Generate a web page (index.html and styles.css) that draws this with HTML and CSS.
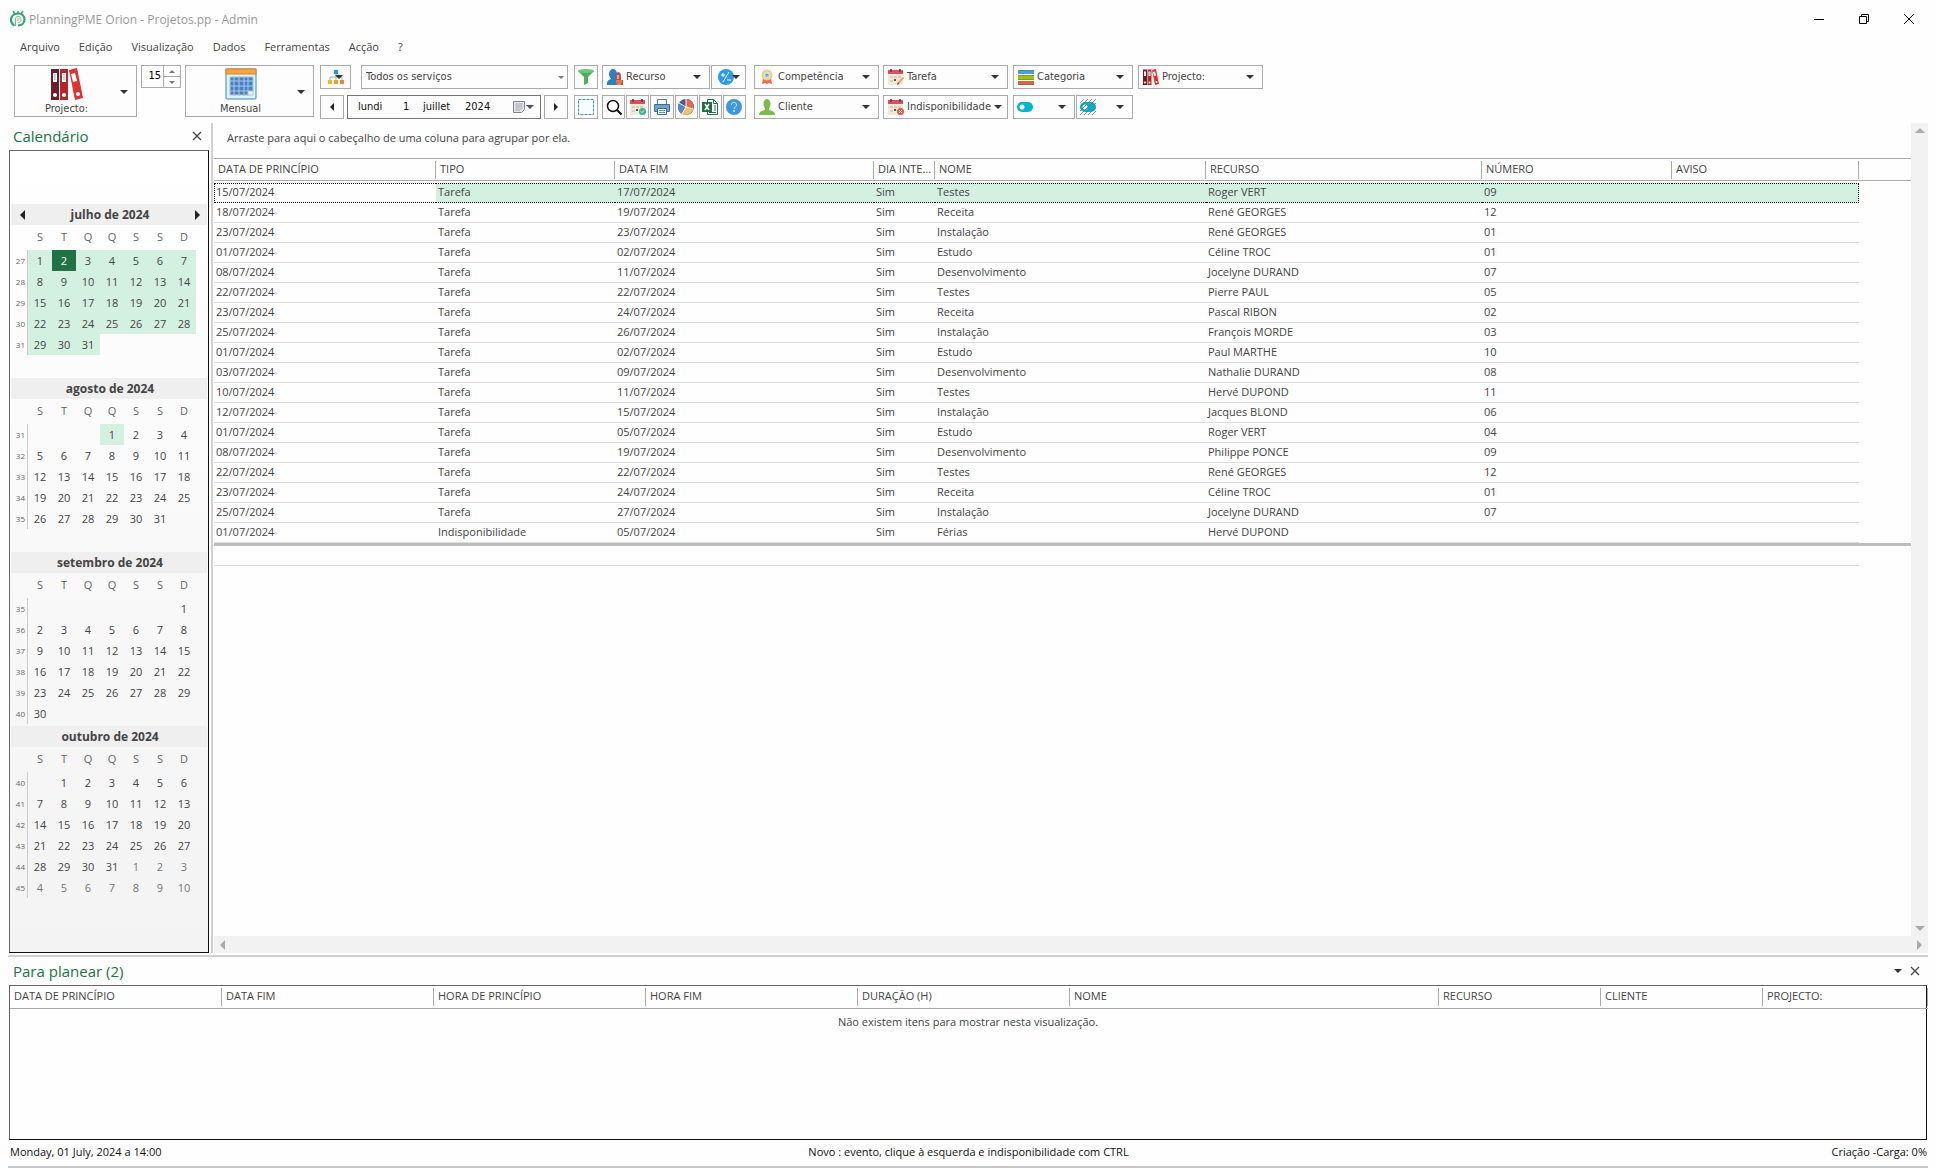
FILE: index.html
```html
<!DOCTYPE html>
<html lang="pt">
<head>
<meta charset="utf-8">
<title>PlanningPME Orion - Projetos.pp - Admin</title>
<link rel="stylesheet" href="styles.css">
</head>
<body>
<svg class="defs" aria-hidden="true">
  <symbol id="i-binders" viewBox="0 0 32 32">
    <path fill="#6b1f2b" d="M0 1h8v31H0z"/><path fill="#b3262c" d="M9 1h8v31H9z"/><path fill="#dd3333" d="M18 2l8-2 6 30-8 2z"/>
    <path fill="#fff" d="M2 5h4v9H2zM11 5h4v9h-4zM20 6l4-1 2 8-4 1z"/>
    <circle cx="4" cy="27" r="2" fill="#fff"/><circle cx="13" cy="27" r="2" fill="#fff"/><circle cx="27" cy="26" r="2" fill="#fff"/>
    <path stroke="#b9a0a3" d="M3 7h2M3 9h2M3 11h2M12 7h2M12 9h2M12 11h2" fill="none"/>
  </symbol>
  <symbol id="i-month" viewBox="0 0 32 32">
    <rect x="1" y="1" width="30" height="30" rx="1" fill="#d9f4fb" stroke="#3d89b5"/>
    <rect x="1" y="1" width="30" height="5" fill="#f6a63c" stroke="#d9822b"/>
    <rect x="5" y="9" width="23" height="18" fill="#4a80c4"/><path fill="#eef4fb" d="M23 23h5v4h-5z"/>
    <path d="M9 8v20M14 8v20M19 8v20M23 8v20M4 13h25M4 18h25M4 23h25" stroke="#a9cbe8" fill="none"/>
    <path d="M5 9h23v18H5z" stroke="#b8c4cc" fill="none"/>
  </symbol>
  <symbol id="i-org" viewBox="0 0 18 16">
    <path d="M9 5v4M3 11V8h12v3M9 8v3" stroke="#a9adb0" fill="none"/>
    <rect x="7" y="1" width="4" height="4" fill="#2196e3"/><rect x="1" y="11" width="4" height="4" fill="#f2b928"/><rect x="7" y="11" width="4" height="4" fill="#f0a030"/><rect x="13" y="11" width="4" height="4" fill="#e88a3c"/>
  </symbol>
  <symbol id="i-funnel" viewBox="0 0 16 16"><path fill="#4fae5b" d="M0 2l6 6v8l4-2V8l6-6z"/><ellipse cx="8" cy="2" rx="8" ry="2" fill="#6cc777"/></symbol>
  <symbol id="i-people" viewBox="0 0 16 16">
    <path fill="#c9484d" d="M11 3c2 0 3 2 3 4v4h2v5H8V5z"/><path fill="#f0b184" d="M10 6h2v4h-2z"/>
    <ellipse cx="6" cy="5" rx="4" ry="5" fill="#2f7fc1"/><path fill="#2f7fc1" d="M4 8h4v2c3 1 4 2 4 6H0c0-4 1-5 4-6z"/><path fill="#e87c4a" d="M9 11h6l-1 5h-4z"/>
  </symbol>
  <symbol id="i-ratio" viewBox="0 0 16 16"><circle cx="8" cy="8" r="8" fill="#2e9be6"/><path d="M3 6h4M5 4v4M5 13l6-10M9 11h4" stroke="#fff" fill="none"/></symbol>
  <symbol id="i-marquee" viewBox="0 0 16 16"><rect x=".5" y=".5" width="15" height="15" fill="#f8fcff" stroke="#3f92d2" stroke-dasharray="3 1"/></symbol>
  <symbol id="i-search" viewBox="0 0 16 16"><circle cx="7" cy="7" r="5.500" fill="none" stroke="#111" stroke-width="1.500"/><path d="M11 11l4.500 4.500" stroke="#111" stroke-width="2"/></symbol>
  <symbol id="i-cal" viewBox="0 0 16 16">
    <path fill="#eeeadb" d="M0 3h15v13H0z"/><path fill="#dc4f5c" d="M0 1h15v4H0z"/><path d="M3 0v3M12 0v3" stroke="#5c3340" stroke-width="1.500"/>
    <path d="M2 7h3v2H2zM6 7h3v2H6zM10 7h3v2h-3zM2 11h3v2H2z" fill="#d6cfba"/><path d="M6 10h2v2H6z" fill="#5e5148"/>
  </symbol>
  <symbol id="i-calok" viewBox="0 0 16 16"><use href="#i-cal"/><circle cx="12.500" cy="12.500" r="3.500" fill="#3fb489"/><path d="M11 12.500l1 1 2-2" stroke="#fff" fill="none"/></symbol>
  <symbol id="i-calpen" viewBox="0 0 16 16"><use href="#i-cal"/><path d="M9 16l1-3 5-5 1 1.500-5 5z" fill="#f0a042"/><path d="M9 16l1-3 1.500 1.500z" fill="#6b4a33"/></symbol>
  <symbol id="i-calno" viewBox="0 0 16 16"><use href="#i-cal"/><circle cx="12.500" cy="12.500" r="3.500" fill="#e2594c"/><path d="M11 11l3 3M14 11l-3 3" stroke="#fff"/></symbol>
  <symbol id="i-print" viewBox="0 0 16 16"><path fill="#fff" stroke="#5c7f9c" d="M3.500.500h9v6h-9z"/><path fill="#6fa3cc" stroke="#3e6c92" d="M.500 5.500h15v7H.500z"/><path fill="#fff" stroke="#3e6c92" d="M3.500 9.500h9v6h-9z"/><path stroke="#5c9bd0" d="M5 11.500h6M5 13.500h6"/></symbol>
  <symbol id="i-pie" viewBox="0 0 16 16"><circle cx="8" cy="8" r="8" fill="#4a5b8c"/><path fill="#e8684a" d="M8 8V0a8 8 0 0 1 7.500 10z"/><path fill="#f3c15f" d="M8 8l7.500 2A8 8 0 0 1 4 15z"/><path fill="#5d87c4" d="M8 8L4 15A8 8 0 0 1 1 4z"/><path d="M8 8V0M8 8l7.500 2M8 8l-4 7M8 8L1 4" stroke="#fff"/></symbol>
  <symbol id="i-excel" viewBox="0 0 16 16"><path fill="#fff" stroke="#1f7145" d="M5.500.500h6l4 4v11h-10z"/><path d="M11.500.500v4h4M12 7h2M12 9h2M12 11h2M7 13.500h7" stroke="#1f7145" fill="none"/><path fill="#1f7145" d="M0 3h10v10H0z"/><path d="M3 5l4 6M7 5l-4 6" stroke="#fff" stroke-width="1.500"/></symbol>
  <symbol id="i-help" viewBox="0 0 16 16"><circle cx="8" cy="8" r="8" fill="#3f97db"/><path d="M5.500 6c0-3.500 5-3.500 5 0 0 2-2.500 2-2.500 4" stroke="#d9ecfa" fill="none"/><circle cx="8" cy="12" r="1" fill="#d9ecfa"/></symbol>
  <symbol id="i-award" viewBox="0 0 16 16"><path fill="#ef6a4c" d="M4 9h4v6l-2-1-3 1zM8 9h4l1 6-3-1-2 1z"/><circle cx="8" cy="6" r="5.500" fill="#f3cf7a"/><circle cx="8" cy="6" r="3.500" fill="#cfe3ee"/><path d="M6.500 5.500h3M6.500 7h3" stroke="#5b8cab"/></symbol>
  <symbol id="i-layers" viewBox="0 0 16 16"><path fill="#4e9fd6" d="M0 1h16v4H0z"/><path fill="#9cc31d" d="M0 6h16v5H0z"/><path fill="#e0603f" d="M0 12h16v4H0z"/><path d="M0 1.500h16M0 6.500h16M0 10.500h16M0 15.500h16" stroke="#4c6e2a" stroke-opacity=".4"/></symbol>
  <symbol id="i-user" viewBox="0 0 16 16"><ellipse cx="8" cy="5" rx="3.500" ry="5" fill="#7cba4c"/><path fill="#7cba4c" d="M6 8h4v3c4 1 6 2 6 5H0c0-3 2-4 6-5z"/></symbol>
  <symbol id="i-toggle" viewBox="0 0 16 16"><rect y="3" width="16" height="10" rx="5" fill="#00b5d0"/><circle cx="5" cy="8" r="2.500" fill="#fff"/></symbol>
  <symbol id="i-toggle2" viewBox="0 0 16 16"><rect y="3" width="16" height="10" rx="5" fill="#00b5d0"/><circle cx="5" cy="8" r="2.500" fill="#fff"/><path d="M0 4l4-4M0 8l8-8M0 12l12-12M0 16L16 0M4 16L16 4M8 16l8-8M12 16l4-4" stroke="#56646a" stroke-opacity=".7" stroke-width="1"/></symbol>
  <symbol id="i-sheet" viewBox="0 0 12 12"><path fill="#e4e6ea" stroke="#81858c" d="M.500.500h11v8l-3 3h-8z"/><path d="M2 3h8M2 5h8M2 7h8M2 9h5M4 2v8M6 2v8M8 2v7" stroke="#a6aab4" stroke-width=".6"/></symbol>
  <symbol id="i-x" viewBox="0 0 10 10"><path d="M1 1l8 8M9 1L1 9" stroke="currentColor" stroke-width="1.300" fill="none"/></symbol>
</svg>

<header class="titlebar">
  <svg class="logo" viewBox="0 0 16 16" aria-hidden="true"><path d="M4.500 14.500C1 13 .500 9 1.500 6.500 3 3 6 2.500 8 2.500c4 0 6.500 2.500 6.500 6S12 14.500 8 14.500" stroke="#2fa573" stroke-width="2.200" fill="none"/><path d="M3 0l2 3M8 0v2M13 0l-2 3" stroke="#2fa573" stroke-width="1.500"/><path d="M5.500 15V8c0-1.500 1-2.500 2.500-2.500s3 1 3 3-1.500 3-3 3" stroke="#54c795" stroke-width="1" fill="none"/><path d="M6.500 8h3.500M6.500 9.500h2" stroke="#e9a13b" stroke-width=".8"/></svg>
  <h1 class="app-title">PlanningPME Orion - Projetos.pp - Admin</h1>
  <div class="window-controls">
    <button aria-label="Minimizar"><svg viewBox="0 0 10 10"><path d="M0 5.500h10" stroke="#000"/></svg></button>
    <button aria-label="Restaurar"><svg viewBox="0 0 10 10"><path d="M.500 2.500h7v7h-7zM2.500 2V.500h7v7H8" stroke="#000" fill="none"/></svg></button>
    <button aria-label="Fechar"><svg viewBox="0 0 10 10"><path d="M0 0l10 10M10 0L0 10" stroke="#000"/></svg></button>
  </div>
</header>

<nav class="menu">
  <a href="#">Arquivo</a><a href="#">Edição</a><a href="#">Visualização</a><a href="#">Dados</a><a href="#">Ferramentas</a><a href="#">Acção</a><a href="#">?</a>
</nav>

<div class="toolbar">
  <button class="big w-project"><span class="big-face"><svg class="ico32"><use href="#i-binders"/></svg>Projecto:</span><i class="caret"></i></button>
  <div class="spin">
    <input type="number" value="15" aria-label="Intervalo">
    <div class="spin-keys"><button aria-label="Aumentar"><i class="tick up"></i></button><button aria-label="Diminuir"><i class="tick"></i></button></div>
  </div>
  <button class="big w-view"><span class="big-face"><svg class="ico32"><use href="#i-month"/></svg>Mensual</span><i class="caret"></i></button>

  <div class="stack period">
    <div class="tools">
      <button class="tool org" aria-label="Organização"><svg class="ico18"><use href="#i-org"/></svg><i class="caret"></i></button>
      <span class="select-wrap"><select aria-label="Serviço"><option>Todos os serviços</option></select><i class="tick"></i></span>
    </div>
    <div class="tools">
      <button class="tool step" aria-label="Anterior"><i class="arrow left small"></i></button>
      <div class="date">
        <input class="d-week" value="lundi" aria-label="Dia da semana"><input class="d-day" value="1" aria-label="Dia"><input class="d-month" value="juillet" aria-label="Mês"><input class="d-year" value="2024" aria-label="Ano">
        <button aria-label="Abrir calendário"><svg class="ico12"><use href="#i-sheet"/></svg><i class="caret blue"></i></button>
      </div>
      <button class="tool step" aria-label="Seguinte"><i class="arrow small"></i></button>
    </div>
  </div>

  <div class="stack single">
    <button class="tool step" aria-label="Filtro"><svg class="ico16"><use href="#i-funnel"/></svg></button>
    <button class="tool step" aria-label="Seleccionar"><svg class="ico16"><use href="#i-marquee"/></svg></button>
  </div>

  <div class="stack actions">
    <div class="tools tight">
      <button class="tool pick w-resource"><svg class="ico16"><use href="#i-people"/></svg>Recurso<i class="caret"></i></button>
      <button class="tool ratio" aria-label="Rácio"><svg class="ico16"><use href="#i-ratio"/></svg><i class="caret"></i></button>
    </div>
    <div class="tools tight">
      <button class="tool key" aria-label="Procurar"><svg class="ico16"><use href="#i-search"/></svg></button>
      <button class="tool key" aria-label="Validar"><svg class="ico16"><use href="#i-calok"/></svg></button>
      <button class="tool key" aria-label="Imprimir"><svg class="ico16"><use href="#i-print"/></svg></button>
      <button class="tool key" aria-label="Estatísticas"><svg class="ico16"><use href="#i-pie"/></svg></button>
      <button class="tool key" aria-label="Excel"><svg class="ico16"><use href="#i-excel"/></svg></button>
      <button class="tool key" aria-label="Ajuda"><svg class="ico16"><use href="#i-help"/></svg></button>
    </div>
  </div>

  <div class="stack filter">
    <button class="tool pick"><svg class="ico16"><use href="#i-award"/></svg>Competência<i class="caret"></i></button>
    <button class="tool pick"><svg class="ico16"><use href="#i-user"/></svg>Cliente<i class="caret"></i></button>
  </div>
  <div class="stack filter">
    <button class="tool pick"><svg class="ico16"><use href="#i-calpen"/></svg>Tarefa<i class="caret"></i></button>
    <button class="tool pick"><svg class="ico16"><use href="#i-calno"/></svg>Indisponibilidade<i class="caret"></i></button>
  </div>
  <div class="stack category">
    <button class="tool pick"><svg class="ico16"><use href="#i-layers"/></svg>Categoria<i class="caret"></i></button>
    <div class="tools tight halves">
      <button class="tool pick" aria-label="Estado"><svg class="ico16"><use href="#i-toggle"/></svg><i class="caret"></i></button>
      <button class="tool pick" aria-label="Estado tracejado"><svg class="ico16"><use href="#i-toggle2"/></svg><i class="caret"></i></button>
    </div>
  </div>
  <div class="stack filter">
    <button class="tool pick"><svg class="ico16"><use href="#i-binders"/></svg>Projecto:<i class="caret"></i></button>
  </div>
</div>

<main class="workspace">
  <aside class="sidebar">
    <div class="panel-head"><h2>Calendário</h2><button aria-label="Fechar calendário"><svg><use href="#i-x"/></svg></button></div>
    <div class="calendar">
      <section>
        <h3><button aria-label="Mês anterior"><i class="arrow left"></i></button>julho de 2024<button aria-label="Mês seguinte"><i class="arrow"></i></button></h3>
        <table class="month">
          <thead><tr><td><th>S<th>T<th>Q<th>Q<th>S<th>S<th>D</thead>
          <tbody>
            <tr class="on"><th>27<td>1<td class="today">2<td>3<td>4<td>5<td>6<td>7
            <tr class="on"><th>28<td>8<td>9<td>10<td>11<td>12<td>13<td>14
            <tr class="on"><th>29<td>15<td>16<td>17<td>18<td>19<td>20<td>21
            <tr class="on"><th>30<td>22<td>23<td>24<td>25<td>26<td>27<td>28
            <tr><th>31<td class="on">29<td class="on">30<td class="on">31<td><td><td><td>
          </tbody>
        </table>
      </section>
      <section>
        <h3>agosto de 2024</h3>
        <table class="month">
          <thead><tr><td><th>S<th>T<th>Q<th>Q<th>S<th>S<th>D</thead>
          <tbody>
            <tr><th>31<td><td><td><td class="on">1<td>2<td>3<td>4
            <tr><th>32<td>5<td>6<td>7<td>8<td>9<td>10<td>11
            <tr><th>33<td>12<td>13<td>14<td>15<td>16<td>17<td>18
            <tr><th>34<td>19<td>20<td>21<td>22<td>23<td>24<td>25
            <tr><th>35<td>26<td>27<td>28<td>29<td>30<td>31<td>
          </tbody>
        </table>
      </section>
      <section>
        <h3>setembro de 2024</h3>
        <table class="month">
          <thead><tr><td><th>S<th>T<th>Q<th>Q<th>S<th>S<th>D</thead>
          <tbody>
            <tr><th>35<td><td><td><td><td><td><td>1
            <tr><th>36<td>2<td>3<td>4<td>5<td>6<td>7<td>8
            <tr><th>37<td>9<td>10<td>11<td>12<td>13<td>14<td>15
            <tr><th>38<td>16<td>17<td>18<td>19<td>20<td>21<td>22
            <tr><th>39<td>23<td>24<td>25<td>26<td>27<td>28<td>29
            <tr><th>40<td>30<td><td><td><td><td><td>
          </tbody>
        </table>
      </section>
      <section>
        <h3>outubro de 2024</h3>
        <table class="month">
          <thead><tr><td><th>S<th>T<th>Q<th>Q<th>S<th>S<th>D</thead>
          <tbody>
            <tr><th>40<td><td>1<td>2<td>3<td>4<td>5<td>6
            <tr><th>41<td>7<td>8<td>9<td>10<td>11<td>12<td>13
            <tr><th>42<td>14<td>15<td>16<td>17<td>18<td>19<td>20
            <tr><th>43<td>21<td>22<td>23<td>24<td>25<td>26<td>27
            <tr><th>44<td>28<td>29<td>30<td>31<td class="off">1<td class="off">2<td class="off">3
            <tr><th>45<td class="off">4<td class="off">5<td class="off">6<td class="off">7<td class="off">8<td class="off">9<td class="off">10
          </tbody>
        </table>
      </section>
    </div>
  </aside>

  <section class="list">
    <div class="list-body">
      <p class="group-hint">Arraste para aqui o cabeçalho de uma coluna para agrupar por ela.</p>
      <table class="grid">
        <colgroup><col class="c1"><col class="c2"><col class="c3"><col class="c4"><col class="c5"><col class="c6"><col class="c7"><col class="c8"><col class="c9"></colgroup>
        <thead><tr><th><span>DATA DE PRINCÍPIO</span><th><span>TIPO</span><th><span>DATA FIM</span><th><span>DIA INTE...</span><th><span>NOME</span><th><span>RECURSO</span><th><span>NÚMERO</span><th><span>AVISO</span><td></thead>
        <tbody>
          <tr class="selected"><td>15/07/2024<td>Tarefa<td>17/07/2024<td>Sim<td>Testes<td>Roger VERT<td>09<td><td>
          <tr><td>18/07/2024<td>Tarefa<td>19/07/2024<td>Sim<td>Receita<td>René GEORGES<td>12<td><td>
          <tr><td>23/07/2024<td>Tarefa<td>23/07/2024<td>Sim<td>Instalação<td>René GEORGES<td>01<td><td>
          <tr><td>01/07/2024<td>Tarefa<td>02/07/2024<td>Sim<td>Estudo<td>Céline TROC<td>01<td><td>
          <tr><td>08/07/2024<td>Tarefa<td>11/07/2024<td>Sim<td>Desenvolvimento<td>Jocelyne DURAND<td>07<td><td>
          <tr><td>22/07/2024<td>Tarefa<td>22/07/2024<td>Sim<td>Testes<td>Pierre PAUL<td>05<td><td>
          <tr><td>23/07/2024<td>Tarefa<td>24/07/2024<td>Sim<td>Receita<td>Pascal RIBON<td>02<td><td>
          <tr><td>25/07/2024<td>Tarefa<td>26/07/2024<td>Sim<td>Instalação<td>François MORDE<td>03<td><td>
          <tr><td>01/07/2024<td>Tarefa<td>02/07/2024<td>Sim<td>Estudo<td>Paul MARTHE<td>10<td><td>
          <tr><td>03/07/2024<td>Tarefa<td>09/07/2024<td>Sim<td>Desenvolvimento<td>Nathalie DURAND<td>08<td><td>
          <tr><td>10/07/2024<td>Tarefa<td>11/07/2024<td>Sim<td>Testes<td>Hervé DUPOND<td>11<td><td>
          <tr><td>12/07/2024<td>Tarefa<td>15/07/2024<td>Sim<td>Instalação<td>Jacques BLOND<td>06<td><td>
          <tr><td>01/07/2024<td>Tarefa<td>05/07/2024<td>Sim<td>Estudo<td>Roger VERT<td>04<td><td>
          <tr><td>08/07/2024<td>Tarefa<td>19/07/2024<td>Sim<td>Desenvolvimento<td>Philippe PONCE<td>09<td><td>
          <tr><td>22/07/2024<td>Tarefa<td>22/07/2024<td>Sim<td>Testes<td>René GEORGES<td>12<td><td>
          <tr><td>23/07/2024<td>Tarefa<td>24/07/2024<td>Sim<td>Receita<td>Céline TROC<td>01<td><td>
          <tr><td>25/07/2024<td>Tarefa<td>27/07/2024<td>Sim<td>Instalação<td>Jocelyne DURAND<td>07<td><td>
          <tr><td>01/07/2024<td>Indisponibilidade<td>05/07/2024<td>Sim<td>Férias<td>Hervé DUPOND<td><td><td>
        </tbody>
        <tfoot><tr><td><td><td><td><td><td><td><td><td></tfoot>
      </table>
    </div>
    <div class="scroll vertical"><i class="tri up"></i><i class="tri down"></i></div>
    <div class="scroll horizontal"><i class="tri left"></i><i class="tri right"></i></div>
  </section>
</main>

<section class="planner">
  <div class="panel-head"><h2>Para planear (2)</h2><button aria-label="Opções"><i class="caret"></i></button><button aria-label="Fechar"><svg><use href="#i-x"/></svg></button></div>
  <div class="planner-box">
    <table class="grid">
      <colgroup><col class="p1"><col class="p1"><col class="p1"><col class="p1"><col class="p1"><col class="p2"><col class="p3"><col class="p3"><col class="p4"></colgroup>
      <thead><tr><th><span>DATA DE PRINCÍPIO</span><th><span>DATA FIM</span><th><span>HORA DE PRINCÍPIO</span><th><span>HORA FIM</span><th><span>DURAÇÃO (H)</span><th><span>NOME</span><th><span>RECURSO</span><th><span>CLIENTE</span><th><span>PROJECTO:</span></thead>
    </table>
    <p class="empty">Não existem itens para mostrar nesta visualização.</p>
  </div>
</section>

<footer class="status"><span>Monday, 01 July, 2024 a 14:00</span><span>Novo : evento, clique à esquerda e indisponibilidade com CTRL</span><span>Criação -Carga: 0%</span></footer>
</body>
</html>
```
FILE: styles.css
```css
* { box-sizing: border-box; }
body {
  margin: 0;
  padding: 0 8px;
  min-height: 100vh;
  display: flex;
  flex-direction: column;
  background: #fefefe;
  color: #444;
  font: 11px/16px "Open Sans", "Noto Sans", sans-serif;
}
h1, h2, h3, p { margin: 0; font-weight: 400; }
button { padding: 0; border: 0; background: none; color: inherit; font: inherit; }
button, select { cursor: pointer; }
a { color: inherit; text-decoration: none; }
svg { display: block; flex: none; }
.defs { position: absolute; width: 0; height: 0; }
.ico12 { width: 12px; height: 12px; }
.ico16 { width: 16px; height: 16px; }
.ico18 { width: 18px; height: 16px; }
.ico32 { width: 32px; height: 32px; }

/* small triangles */
.caret, .tick, .arrow, .tri { display: block; flex: none; width: 0; height: 0; border: solid transparent; }
.caret { border-width: 4px 4px 0; border-top-color: #333; }
.caret.blue { border-top-color: #44546e; }
.tick { border-width: 3px 3px 0; border-top-color: #777; }
.tick.up { border-width: 0 3px 3px; border-bottom-color: #777; }
.arrow { border-width: 5px 0 5px 5px; border-left-color: #222; }
.arrow.left { border-width: 5px 5px 5px 0; border-right-color: #222; }
.arrow.small { border-width: 4px 0 4px 4px; }
.arrow.left.small { border-width: 4px 4px 4px 0; }

/* title bar and menu */
.titlebar { display: flex; align-items: center; height: 38px; padding-left: 2px; gap: 3px; }
.logo { width: 16px; height: 16px; }
.app-title { flex: 1; color: #999; font-size: 12px; line-height: 18px; padding-top: 2px; }
.window-controls { display: flex; }
.window-controls button { display: grid; place-items: center; width: 45px; height: 38px; }
.window-controls button:last-child { margin-right: -3px; }
.window-controls svg { width: 10px; height: 10px; }
.menu { display: flex; gap: 19px; height: 27px; padding-left: 12px; line-height: 18px; }

/* toolbar */
.toolbar { display: flex; align-items: flex-start; gap: 4px; height: 58px; padding-left: 6px; font-family: "DejaVu Sans Condensed", "DejaVu Sans", sans-serif; }
.big, .tool, .spin, .date, .select-wrap { border: 1px solid #aaa; background: #fdfdfd; }
.big { display: flex; align-items: center; justify-content: space-between; height: 52px; padding: 1px 8px 0 0; }
.big-face { display: flex; flex-direction: column; align-items: center; flex: 1; height: 50px; padding: 1px 2px 0 0; line-height: 17px; }
.w-project { width: 123px; }
.w-view { width: 129px; }
.spin { display: flex; width: 40px; height: 23px; }
.spin input { width: 22px; padding: 0 2px 2px; border: 0; border-right: 1px solid #aaa; background: none; color: #000; font: inherit; text-align: right; appearance: textfield; }
.spin input::-webkit-inner-spin-button { display: none; }
.spin-keys { display: flex; flex-direction: column; flex: 1; }
.spin-keys button { flex: 1; display: grid; place-items: center; }
.spin-keys button + button { border-top: 1px solid #aaa; }
.stack { display: flex; flex-direction: column; gap: 6px; flex: none; }
.tools { display: flex; gap: 3px; }
.tools.tight { gap: 1px; }
.tool { display: flex; align-items: center; justify-content: center; height: 24px; white-space: nowrap; }
.period { width: 248px; margin-left: 2px; }
.org { position: relative; width: 31px; margin-right: 7px; }
.org .caret { position: absolute; right: 7px; top: 9px; }
.step { width: 24px; }
.select-wrap { display: flex; align-items: center; flex: 1; padding-right: 3px; }
.select-wrap select { flex: 1; align-self: stretch; padding: 0 4px; border: 0; background: none; color: inherit; font: inherit; appearance: none; }
.date { display: flex; align-items: center; flex: 1; border-color: #777; padding: 0 6px 0 10px; }
.date input { min-width: 0; padding: 0; border: 0; background: none; color: #111; font: inherit; }
.d-week { width: 45px; }
.d-day { width: 20px; }
.d-month { width: 42px; }
.d-year { width: 45px; }
.date button { display: flex; align-items: center; gap: 1px; margin-left: auto; }
.single { margin-left: 2px; }
.actions { width: 144px; }
.w-resource { width: 108px; }
.ratio { width: 35px; }
.ratio .caret { margin-left: -2px; }
.key { flex: 1; }
.pick { justify-content: flex-start; gap: 3px; padding: 0 8px 0 4px; }
.pick .caret { margin-left: auto; }
.filter, .category { margin-left: 1px; }
.filter .tool { width: 125px; }
.filter + .filter { margin-left: 0; }
.actions + .filter { margin-left: 4px; }
.category { width: 120px; }
.halves .pick { width: 57px; padding-left: 3px; }
.halves .pick:first-child { width: 62px; }

/* work area */
.workspace { display: flex; flex: 1; padding-bottom: 2px; }
.sidebar { display: flex; flex-direction: column; flex: none; width: 203px; padding: 0 2px 0 1px; }
.panel-head { display: flex; align-items: center; gap: 8px; height: 27px; padding: 0 7px 2px 4px; }
.panel-head h2 { flex: 1; color: #217346; font-size: 15px; line-height: 20px; }
.panel-head svg { width: 10px; height: 10px; }
.calendar { flex: 1; padding: 53px 1px 0; border: 1px solid #111; border-top-color: #666; border-left-color: #666; background: linear-gradient(#fff, #f3f3f3); }
.calendar section { min-height: 174px; }
.calendar h3 { display: flex; justify-content: center; gap: 40px; height: 21px; padding-left: 2px; background: #efefef; font-size: 12px; line-height: 21px; font-weight: 700; }
.calendar h3 button { display: grid; place-items: center; }
.calendar h3:has(button) { justify-content: space-between; padding: 0 7px 0 9px; }
.month { table-layout: fixed; width: 185px; border-spacing: 0; text-align: center; }
.month th, .month td { padding: 0; height: 21px; width: 24px; font-weight: 400; line-height: 16px; }
.month thead th, .month thead td { height: 25px; padding-bottom: 2px; color: #666; }
.month tr > :first-child { width: 17px; }
.month tbody th { padding-right: 2px; border-right: 1px solid #ccc; color: #666; font-size: 8px; text-align: right; }
.month .on td, .month td.on { background: #d4f0e1; }
.month .on td.today { background: #217346; color: #fff; }
.month .off { color: #777; }

/* list */
.list { display: grid; grid-template: 1fr 17px / 1fr 17px; flex: 1; min-width: 0; padding-left: 1px; border-left: 2px solid #d0d0d0; }
.group-hint { height: 35px; padding-left: 13px; line-height: 29px; }
.grid { table-layout: fixed; width: 100%; border-spacing: 0; }
.grid th, .grid thead td { padding: 2px 0; border-bottom: 1px solid #aaa; font-weight: 400; text-align: left; }
.list .grid th, .list .grid thead td { padding-bottom: 1px; border-top: 1px solid #aaa; }
.grid th span { display: block; height: 18px; padding-left: 4px; border-right: 1px solid #aaa; line-height: 16px; white-space: nowrap; }
.grid tbody::before { content: ""; display: block; height: 2px; }
.grid tbody td, .grid tfoot td { height: 20px; padding: 0 2px 2px; border-bottom: 1px solid #ddd; white-space: nowrap; }
.grid td:last-child { border-bottom-color: transparent; }
.grid thead td:last-child { border-bottom-color: #aaa; }
.grid .selected td { border-top: 1px dotted #000; border-bottom: 1px dotted #000; background: #d4f0e1; }
.grid .selected td:first-child { padding-left: 1px; border-left: 1px dotted #000; background: none; }
.grid .selected td:nth-child(8) { border-right: 1px dotted #000; }
.grid .selected td:last-child { border-color: transparent; background: none; }
.grid tfoot td { height: 23px; border-top: 3px solid #bdbdbd; }
.c1 { width: 222px; } .c2 { width: 179px; } .c3 { width: 259px; } .c4 { width: 61px; } .c5 { width: 271px; }
.c6 { width: 276px; } .c7 { width: 190px; } .c8 { width: 187px; } .c9 { width: 52px; }
.scroll { display: flex; align-items: center; justify-content: space-between; background: #f2f2f2; }
.vertical { flex-direction: column; padding: 5px 0; }
.horizontal { grid-column: 1 / -1; padding: 0 6px; }
.tri.up { border-width: 0 5px 5px; border-bottom-color: #aaa; }
.tri.down { border-width: 5px 5px 0; border-top-color: #aaa; }
.tri.left { border-width: 5px 5px 5px 0; border-right-color: #aaa; }
.tri.right { border-width: 5px 0 5px 5px; border-left-color: #aaa; }

/* lower panel and status line */
.planner { border-top: 2px solid #d0d0d0; padding: 0 1px; }
.planner .panel-head { height: 28px; padding-bottom: 0; }
.planner-box { min-height: 155px; border: 1px solid #111; border-top-color: #666; border-left-color: #666; }
.p1 { width: 212px; } .p2 { width: 369px; } .p3 { width: 162px; } .p4 { width: 165px; }
.empty { padding-top: 5px; text-align: center; }
.status { display: grid; grid-template-columns: 1fr auto 1fr; height: 28px; padding: 0 1px 0 2px; border-bottom: 2px solid #c6c6c6; color: #111; line-height: 24px; }
.status span:last-child { text-align: right; }
```
